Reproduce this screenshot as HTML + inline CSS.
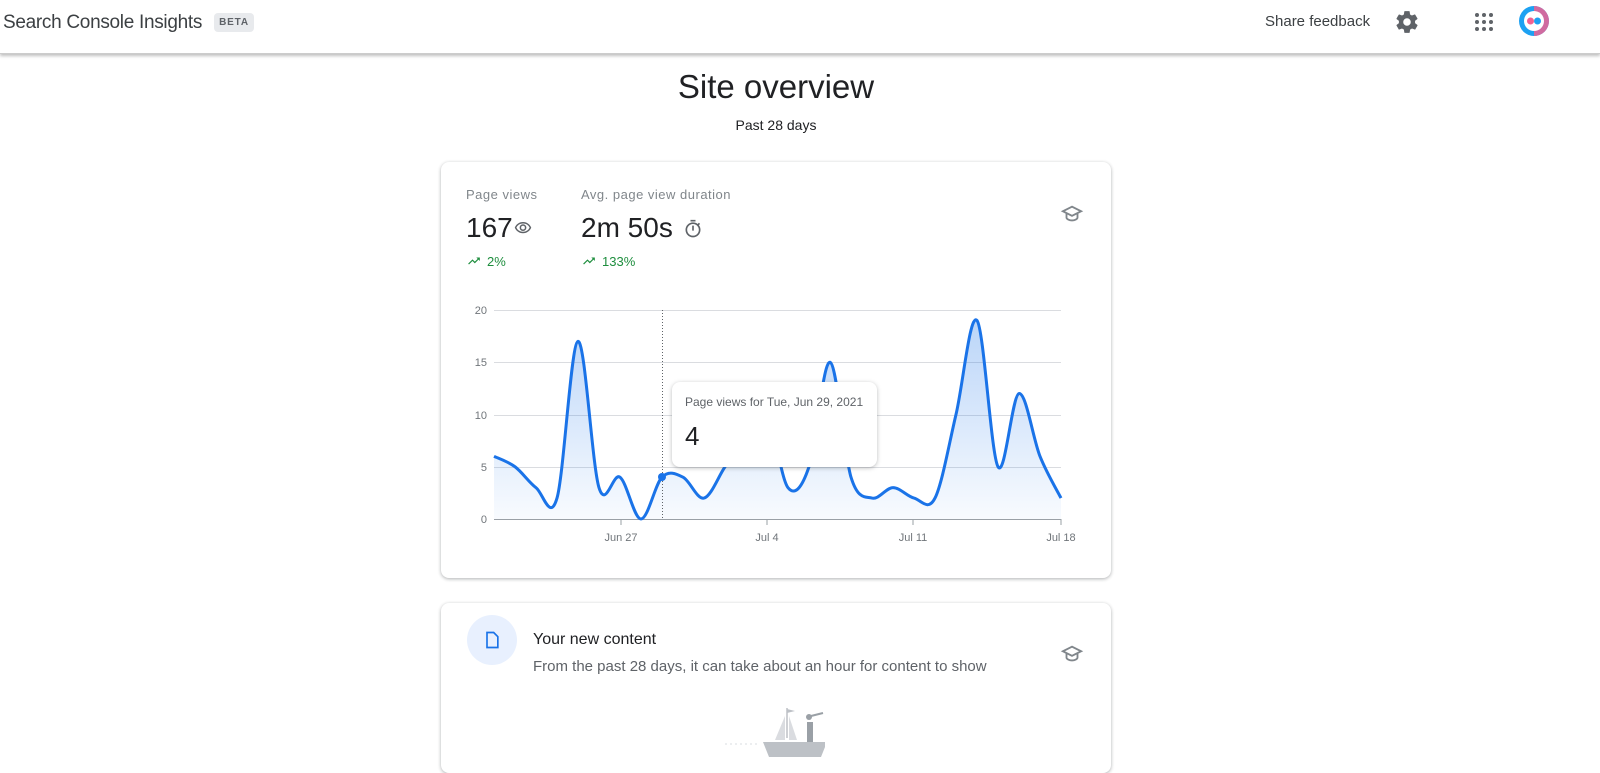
<!DOCTYPE html>
<html><head><meta charset="utf-8"><style>
*{box-sizing:border-box;margin:0;padding:0}
body{width:1600px;height:757px;overflow:hidden;background:#fff;font-family:"Liberation Sans",sans-serif;color:#202124;position:relative}
.hdr{position:absolute;left:0;top:0;width:1600px;height:54px;background:#fff;border-bottom:1px solid #ccc;box-shadow:0 2px 3px rgba(0,0,0,.25)}
.abs{position:absolute}
.card{position:absolute;left:441px;width:670px;background:#fff;border-radius:8px;box-shadow:0 1px 3px rgba(60,64,67,.3),0 1px 4px rgba(60,64,67,.12)}
.lbl{font-size:13px;color:#80868b;letter-spacing:.5px}
.big{font-size:28px;color:#202124}
.grn{font-size:13px;color:#1e8e3e}
.ax{font-size:11px;fill:#70757a;font-family:"Liberation Sans",sans-serif}
</style></head><body>
<div class="hdr">
 <div class="abs" style="left:3px;top:12px;font-size:19px;color:#3c4043;letter-spacing:-0.3px">Search Console Insights</div>
 <div class="abs" style="left:214px;top:13px;width:40px;height:19px;background:#e8eaed;border-radius:4px;font-size:10px;color:#5f6368;text-align:center;line-height:19px;letter-spacing:.8px;font-weight:bold">BETA</div>
 <div class="abs" style="left:1265px;top:13px;font-size:15px;color:#3c4043">Share feedback</div>
 <svg class="abs" style="left:1394px;top:9px" width="26" height="26" viewBox="0 0 24 24"><path fill="#5f6368" d="M19.4 13c.04-.3.06-.65.06-1s-.02-.7-.07-1l2.1-1.65c.2-.15.24-.42.12-.64l-2-3.460c-.12-.22-.39-.3-.61-.22l-2.490 1c-.52-.39-1.06-.73-1.690-.98l-.37-2.650A.5.5 0 0 0 14 2h-4c-.25 0-.46.18-.5.42l-.37 2.65c-.63.25-1.17.59-1.69.98l-2.49-1c-.22-.08-.49 0-.61.22l-2 3.46c-.13.22-.07.49.12.64L4.57 11c-.04.32-.07.66-.07 1s.02.68.07 1l-2.11 1.65c-.19.15-.24.42-.12.64l2 3.46c.12.22.39.3.61.22l2.49-1c.52.39 1.06.73 1.69.98l.37 2.65c.04.24.25.42.5.42h4c.25 0 .46-.18.5-.42l.37-2.65c.63-.26 1.17-.59 1.69-.98l2.49 1c.23.09.49 0 .61-.22l2-3.46c.12-.22.07-.49-.12-.64L19.4 13zM12 15.5a3.5 3.5 0 1 1 0-7 3.5 3.5 0 0 1 0 7z"/><circle cx="12" cy="12" r="2.2" fill="#fff"/></svg>
 <svg class="abs" style="left:1474px;top:12px" width="20" height="20" viewBox="0 0 20 20" fill="#5f6368"><circle cx="3" cy="3" r="2"/><circle cx="10" cy="3" r="2"/><circle cx="17" cy="3" r="2"/><circle cx="3" cy="10" r="2"/><circle cx="10" cy="10" r="2"/><circle cx="17" cy="10" r="2"/><circle cx="3" cy="17" r="2"/><circle cx="10" cy="17" r="2"/><circle cx="17" cy="17" r="2"/></svg>
 <svg class="abs" style="left:1518px;top:5px" width="32" height="32" viewBox="0 0 32 32"><circle cx="16" cy="16" r="15" fill="#1da1f2"/><path d="M16 1a15 15 0 0 1 0 30" fill="#f06292" opacity=".85"/><circle cx="16" cy="16" r="10" fill="#fff"/><circle cx="12.5" cy="16" r="3.5" fill="#f06292"/><circle cx="19.5" cy="16" r="3.5" fill="#1da1f2"/></svg>
</div>
<div class="abs" style="left:0;width:1552px;top:68px;text-align:center;font-size:33px;color:#202124">Site overview</div>
<div class="abs" style="left:0;width:1552px;top:117px;text-align:center;font-size:14px;color:#202124">Past 28 days</div>

<div class="card" style="top:162px;height:416px"></div>
<div class="abs lbl" style="left:466px;top:187px">Page views</div>
<div class="abs lbl" style="left:581px;top:187px">Avg. page view duration</div>
<div class="abs big" style="left:466px;top:212px">167</div>
<svg class="abs" style="left:512px;top:219px" width="22" height="18" viewBox="0 0 24 24"><path fill="#5f6368" d="M12 6a9.77 9.77 0 0 1 8.82 5.5A9.770 9.770 0 0 1 12 17a9.77 9.77 0 0 1-8.82-5.5A9.77 9.77 0 0 1 12 6m0-2C7 4 2.73 7.11 1 11.5 2.73 15.89 7 19 12 19s9.27-3.11 11-7.5C21.27 7.11 17 4 12 4zm0 5a2.5 2.5 0 1 1 0 5 2.5 2.5 0 0 1 0-5m0-2c-2.48 0-4.5 2.02-4.5 4.5S9.52 16 12 16s4.5-2.02 4.5-4.5S14.48 7 12 7z"/></svg>
<div class="abs big" style="left:581px;top:212px">2m 50s</div>
<svg class="abs" style="left:683px;top:219px" width="20" height="20" viewBox="0 0 24 24"><path fill="#5f6368" d="M15 1H9v2h6V1zm-4 13h2V8h-2v6zm8.03-6.61l1.42-1.42c-.43-.51-.9-.99-1.41-1.41l-1.42 1.42A8.96 8.96 0 0 0 12 4c-4.97 0-9 4.03-9 9s4.02 9 9 9 9-4.03 9-9c0-2.12-.74-4.07-1.97-5.61zM12 20c-3.87 0-7-3.13-7-7s3.13-7 7-7 7 3.13 7 7-3.13 7-7 7z"/></svg>
<svg class="abs" style="left:466px;top:254px" width="16" height="14" viewBox="0 0 24 24"><path fill="#1e8e3e" d="M16 6l2.29 2.29-4.88 4.88-4-4L2 16.59 3.41 18l6-6 4 4 6.3-6.29L22 12V6z"/></svg>
<div class="abs grn" style="left:487px;top:254px">2%</div>
<svg class="abs" style="left:581px;top:254px" width="16" height="14" viewBox="0 0 24 24"><path fill="#1e8e3e" d="M16 6l2.29 2.29-4.88 4.88-4-4L2 16.59 3.41 18l6-6 4 4 6.3-6.29L22 12V6z"/></svg>
<div class="abs grn" style="left:602px;top:254px">133%</div>
<svg class="abs" style="left:1060px;top:203px" width="24" height="22" viewBox="0 0 24 24"><path fill="none" stroke="#80868b" stroke-width="2" d="M12 4L2 9l10 5 10-5z M6 11v5c0 1.5 3 3 6 3s6-1.5 6-3v-5"/></svg>

<svg class="abs" style="left:0;top:0" width="1600" height="757" id="ch">
<defs><linearGradient id="g" x1="0" y1="0" x2="0" y2="1"><stop offset="0" stop-color="#1a73e8" stop-opacity=".3"/><stop offset="1" stop-color="#1a73e8" stop-opacity=".03"/></linearGradient></defs>
<g stroke="#dadce0" stroke-width="1"><line x1="494" x2="1061" y1="310.5" y2="310.5"/><line x1="494" x2="1061" y1="362.5" y2="362.5"/><line x1="494" x2="1061" y1="415.5" y2="415.5"/><line x1="494" x2="1061" y1="467.5" y2="467.5"/></g>
<line x1="494" x2="1061" y1="519.5" y2="519.5" stroke="#9aa0a6"/>
<g stroke="#9aa0a6"><line x1="621" x2="621" y1="519" y2="525"/><line x1="767" x2="767" y1="519" y2="525"/><line x1="913" x2="913" y1="519" y2="525"/><line x1="1061" x2="1061" y1="519" y2="525"/></g>
<g class="ax" text-anchor="end"><text x="487" y="314">20</text><text x="487" y="366">15</text><text x="487" y="419">10</text><text x="487" y="471">5</text><text x="487" y="523">0</text></g>
<g class="ax" text-anchor="middle"><text x="621" y="541">Jun 27</text><text x="767" y="541">Jul 4</text><text x="913" y="541">Jul 11</text><text x="1061" y="541">Jul 18</text></g>
<path id="area" fill="url(#g)"/>
<path id="ln" fill="none" stroke="#1a73e8" stroke-width="3"/>
<line x1="662.5" x2="662.5" y1="310" y2="519" stroke="#5f6368" stroke-dasharray="1 2"/>
<circle cx="662" cy="477" r="4" fill="#1a73e8"/>
</svg>
<div class="abs" style="left:672px;top:382px;width:205px;height:85px;background:#fff;border-radius:8px;box-shadow:0 1px 4px rgba(60,64,67,.35)">
 <div class="abs" style="left:13px;top:13px;font-size:12px;color:#5f6368">Page views for Tue, Jun 29, 2021</div>
 <div class="abs" style="left:13px;top:39px;font-size:26px;color:#202124">4</div>
</div>

<div class="card" style="top:603px;height:170px"></div>
<div class="abs" style="left:467px;top:615px;width:50px;height:50px;border-radius:50%;background:#e8f0fe"></div>
<svg class="abs" style="left:482px;top:630px" width="20" height="20" viewBox="0 0 24 24"><path fill="none" stroke="#1a73e8" stroke-width="2" d="M6 3h8l5 5v13H6z"/></svg>
<div class="abs" style="left:533px;top:631px;font-size:16px;color:#202124">Your new content</div>
<div class="abs" style="left:533px;top:658px;font-size:15px;color:#5f6368">From the past 28 days, it can take about an hour for content to show</div>
<svg class="abs" style="left:1060px;top:643px" width="24" height="22" viewBox="0 0 24 24"><path fill="none" stroke="#80868b" stroke-width="2" d="M12 4L2 9l10 5 10-5z M6 11v5c0 1.5 3 3 6 3s6-1.5 6-3v-5"/></svg>
<svg class="abs" style="left:725px;top:700px" width="100" height="57" viewBox="0 0 100 57"><path d="M62 8v30" stroke="#bdc1c6" stroke-width="1.5"/><path d="M62 9l8 2-8 2z" fill="#bdc1c6"/><path d="M60 16L50 40h10z" fill="#dadce0"/><path d="M64 16l8 24h-8z" fill="#dadce0"/><rect x="82" y="22" width="6" height="22" fill="#9aa0a6"/><circle cx="84" cy="17" r="3" fill="#9aa0a6"/><path d="M86 16l12-3" stroke="#9aa0a6" stroke-width="2"/><path d="M38 42h64l-6 15H44z" fill="#bdc1c6"/><path d="M0 44h35M102 44h10" stroke="#dadce0" stroke-dasharray="2 3"/></svg>

<script>
var v=[6,5,3,2,17,3,4,0,4,4,2,5,8,10,3,5,15,4,2,3,2,2,10,19,5,12,6,2];
var p=v.map(function(d,i){return [494+i*(567/27),519-d*10.45];});
var s="M"+p[0][0]+","+p[0][1];
for(var i=0;i<p.length-1;i++){var a=p[i-1]||p[i],b=p[i],c=p[i+1],d=p[i+2]||c;
s+=" C"+(b[0]+(c[0]-a[0])/6)+","+(b[1]+(c[1]-a[1])/6)+" "+(c[0]-(d[0]-b[0])/6)+","+(c[1]-(d[1]-b[1])/6)+" "+c[0]+","+c[1];}
document.getElementById("ln").setAttribute("d",s);
document.getElementById("area").setAttribute("d",s+" L1061,519 L494,519Z");
</script>
</body></html>
